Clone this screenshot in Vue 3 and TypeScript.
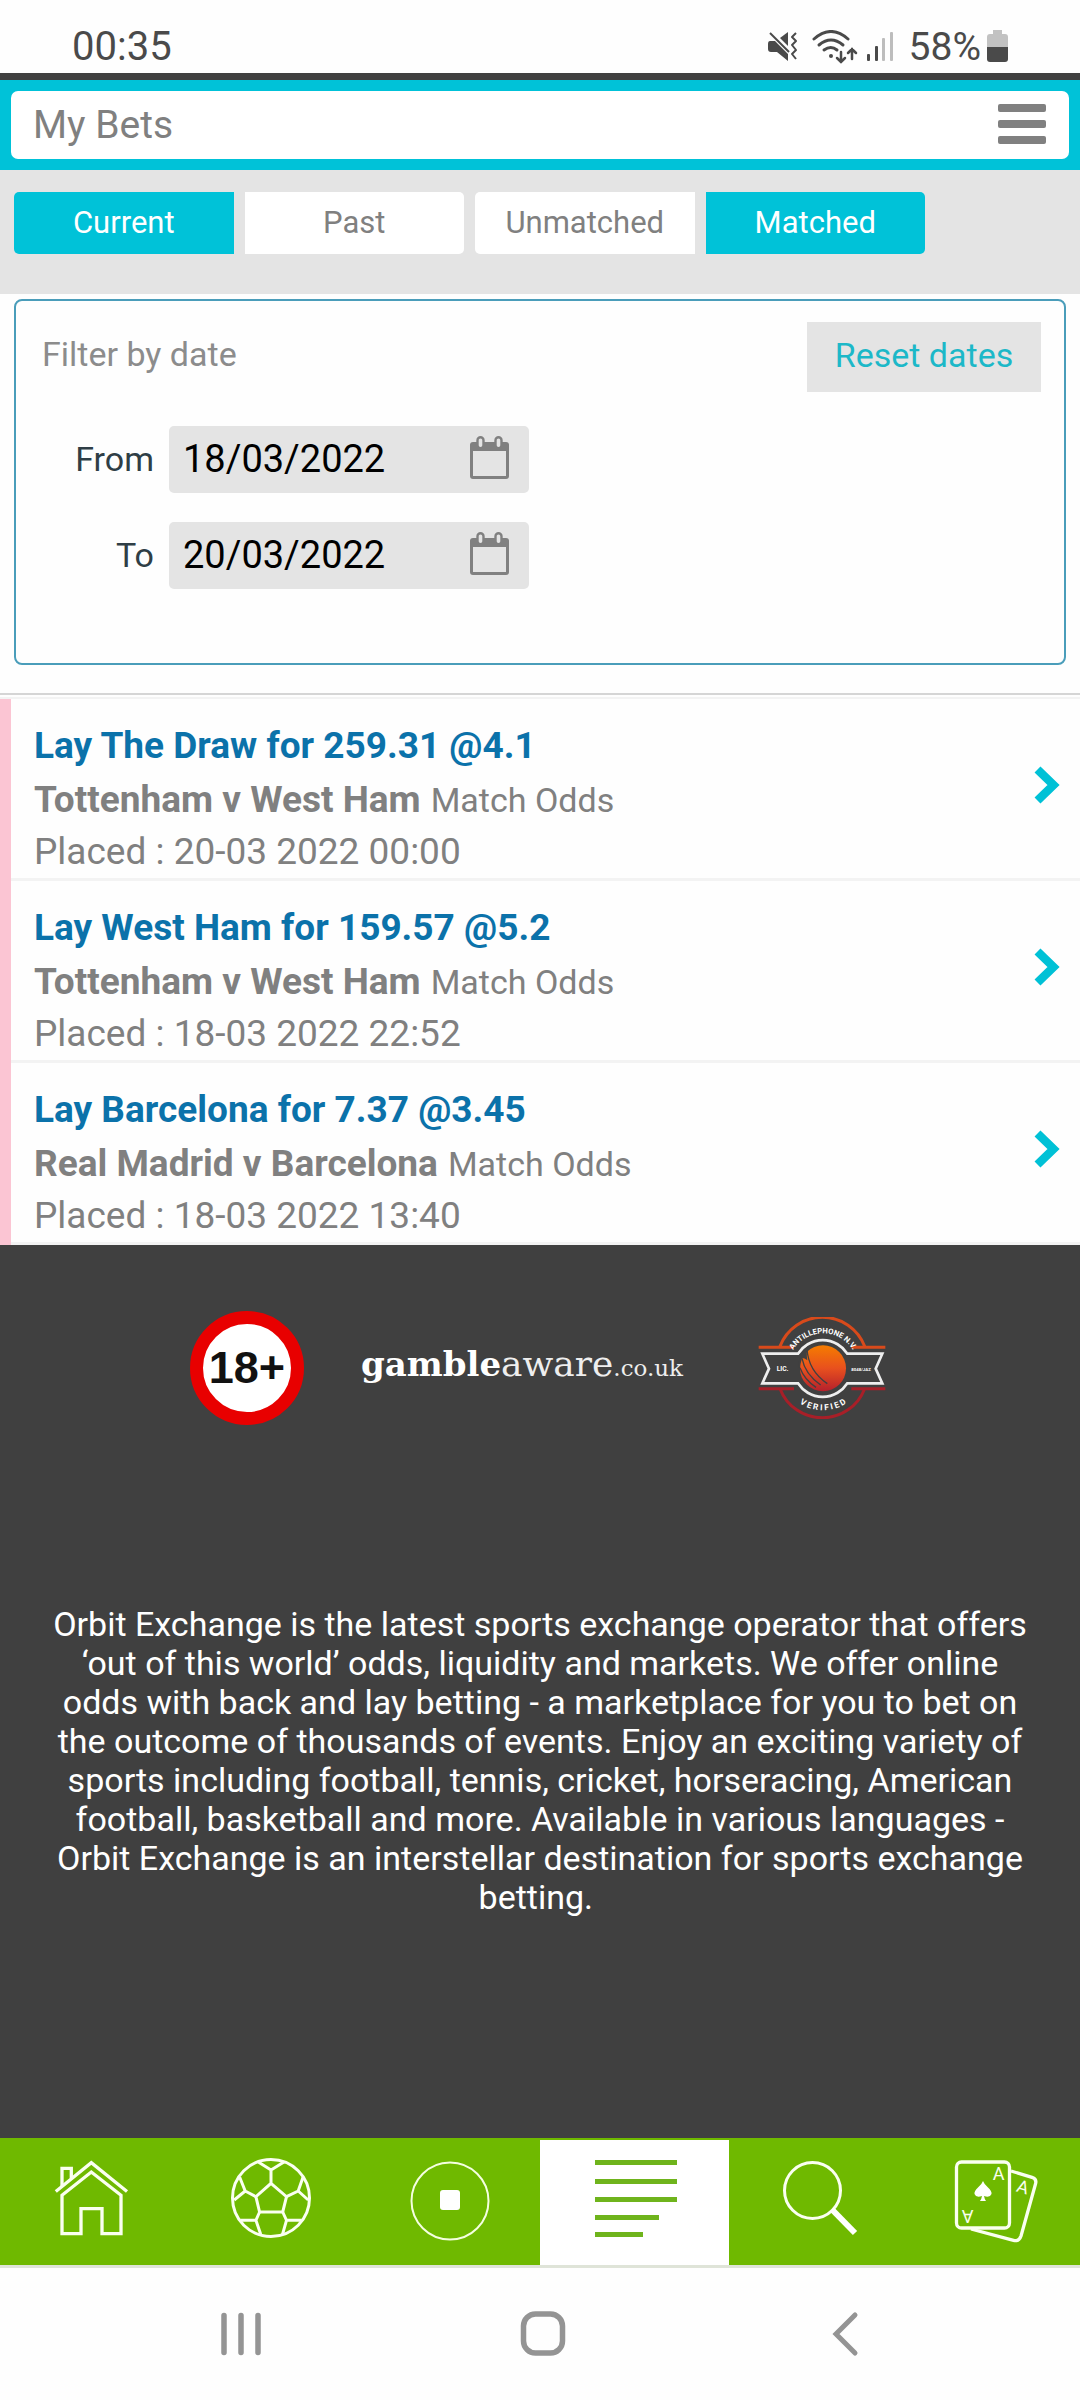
<script setup lang="ts">
import { ref } from 'vue'

interface Bet {
  id: number
  title: string
  event: string
  market: string
  placed: string
}

interface Tab {
  label: string
  edge: 'left' | 'right'
  active: boolean
}

const tabs: Tab[] = [
  { label: 'Current', edge: 'left', active: true },
  { label: 'Past', edge: 'right', active: false },
  { label: 'Unmatched', edge: 'left', active: false },
  { label: 'Matched', edge: 'right', active: true },
]

const bets: Bet[] = [
  { id: 1, title: 'Lay The Draw for 259.31 @4.1', event: 'Tottenham v West Ham', market: 'Match Odds', placed: '20-03 2022 00:00' },
  { id: 2, title: 'Lay West Ham for 159.57 @5.2', event: 'Tottenham v West Ham', market: 'Match Odds', placed: '18-03 2022 22:52' },
  { id: 3, title: 'Lay Barcelona for 7.37 @3.45', event: 'Real Madrid v Barcelona', market: 'Match Odds', placed: '18-03 2022 13:40' },
]

const dates = ref([
  { id: 'from', label: 'From', value: '18/03/2022' },
  { id: 'to', label: 'To', value: '20/03/2022' },
])
</script>

<template>
  <div class="page">
    <div class="status">
      <span class="time">00:35</span>
      <div class="indicators">
        <svg class="ico-mute" width="30" height="32" viewBox="0 0 30 32" fill="#4a4a4a">
          <path d="M2 10h5l13 13v7L9 21H3q-3 0-3-3v-5q0-3 2-3z" />
          <path d="M12 7l8-6v14z" />
          <path d="M2 2l19 19" stroke="#4a4a4a" stroke-width="2" />
          <path d="M28 2l-4 4 4 4-4 4 4 5-4 4 4 5" fill="none" stroke="#4a4a4a" stroke-width="2" stroke-linejoin="round" />
        </svg>
        <svg class="ico-wifi" width="46" height="34" viewBox="0 0 46 34" fill="none" stroke="#4a4a4a" stroke-width="3" stroke-linecap="round">
          <path d="M2 9q17-15 34 0" />
          <path d="M7 15q12-10 24 0" />
          <path d="M12 20q7-5 13 0" />
          <circle cx="19" cy="26" r="2" fill="#4a4a4a" stroke="none" />
          <path d="M29 22v10M25 28l4 4 4-4M40 29V19M36 23l4-4 4 4" stroke-width="2.5" />
        </svg>
        <svg class="ico-signal" width="28" height="32" viewBox="0 0 28 32">
          <rect x="1" y="23" width="3" height="7" rx="1" fill="#4a4a4a" />
          <rect x="9" y="15" width="3" height="15" rx="1" fill="#4a4a4a" />
          <rect x="16" y="7" width="3" height="23" rx="1" fill="#bdbdbd" />
          <rect x="24" y="1" width="3" height="29" rx="1" fill="#bdbdbd" />
        </svg>
        <span class="percent">58%</span>
        <svg class="ico-battery" width="21" height="32" viewBox="0 0 21 32">
          <path d="M6 0h9v4h3q3 0 3 3v10H0V7q0-3 3-3h3z" fill="#c2c2c2" />
          <path d="M0 17h21v12q0 3-3 3H3q-3 0-3-3z" fill="#4a4a4a" />
        </svg>
      </div>
    </div>

    <header class="header">
      <div class="title-bar">
        <h1>My Bets</h1>
        <button class="menu" type="button" aria-label="Menu"><i></i><i></i><i></i></button>
      </div>
    </header>

    <div class="tabs">
      <button
        v-for="tab in tabs"
        :key="tab.label"
        type="button"
        class="tab"
        :class="[tab.edge, { active: tab.active }]"
      >{{ tab.label }}</button>
    </div>

    <main class="main">
      <section class="filter">
        <div class="filter-head">
          <span class="filter-title">Filter by date</span>
          <button class="reset" type="button">Reset dates</button>
        </div>
        <div v-for="d in dates" :key="d.id" class="field-row">
          <label :for="d.id">{{ d.label }}</label>
          <div class="field">
            <input :id="d.id" v-model="d.value" type="text" />
            <button type="button" class="calendar" :aria-label="`Pick ${d.label} date`">
              <svg width="39" height="43" viewBox="0 0 39 43">
                <rect x="1.5" y="9" width="36" height="32.5" rx="1.5" fill="none" stroke="#808080" stroke-width="3" />
                <path d="M3 6h33q3 0 3 3v6H0V9q0-3 3-3z" fill="#808080" />
                <rect x="7.5" y="1.2" width="6" height="11" rx="3" fill="#e4e4e4" stroke="#808080" stroke-width="2.4" />
                <rect x="25.5" y="1.2" width="6" height="11" rx="3" fill="#e4e4e4" stroke="#808080" stroke-width="2.4" />
              </svg>
            </button>
          </div>
        </div>
      </section>

      <ul class="bets">
        <li v-for="bet in bets" :key="bet.id">
          <a href="#" class="bet">
            <div class="bet-text">
              <div class="bet-title">{{ bet.title }}</div>
              <div class="bet-event"><strong>{{ bet.event }}</strong><span>{{ bet.market }}</span></div>
              <div class="bet-placed">Placed : {{ bet.placed }}</div>
            </div>
            <svg width="26" height="40" viewBox="0 0 26 40">
              <path d="M3.5 4.5L19.5 20L3.5 35.5" fill="none" stroke="#00c1d6" stroke-width="8.5" />
            </svg>
          </a>
        </li>
      </ul>
    </main>

    <footer class="footer">
      <div class="logos">
        <div class="age">18+</div>
        <a href="#" class="aware"><b>gamble</b>aware<small>.co.uk</small></a>
        <svg class="licence" width="128" height="102" viewBox="54 84 384 306">
          <defs>
            <linearGradient id="orb" x1="0" y1="0" x2="0" y2="1">
              <stop offset="0" stop-color="#f57c00" />
              <stop offset="0.5" stop-color="#e8501e" />
              <stop offset="1" stop-color="#b5202c" />
            </linearGradient>
            <path id="arc-top" d="M144 238A105 105 0 0 1 354 238" />
            <path id="arc-bottom" d="M123 238A126 126 0 0 0 375 238" />
          </defs>
          <path d="M56 175H162M120 172A136 136 0 0 1 374 172M334 175H436" fill="none" stroke="#d84a1b" stroke-width="9" />
          <path d="M56 299H162M120 299A136 136 0 0 0 374 299M334 299H436" fill="none" stroke="#a81f28" stroke-width="9" />
          <path d="M67 194H174A88 88 0 0 1 322 194H427L407 239L427 283H322A88 88 0 0 1 174 283H67L87 239Z" fill="#404040" stroke="#eee" stroke-width="8" />
          <circle cx="249" cy="238" r="69" fill="url(#orb)" />
          <path d="M174 230Q182 190 204 170Q198 190 202 214Q190 205 184 208Q180 215 180 240Z" fill="#404040" />
          <path d="M201 180Q205 245 262 284M186 208Q195 255 242 288M180 236Q192 270 228 295" fill="none" stroke="#404040" stroke-width="4" />
          <g class="licence-text">
            <text font-size="23"><textPath href="#arc-top" startOffset="50%" text-anchor="middle">ANTILLEPHONE N.V.</textPath></text>
            <text font-size="25"><textPath href="#arc-bottom" startOffset="50%" text-anchor="middle">V E R I F I E D</textPath></text>
            <text x="110" y="247" font-size="20">LIC.</text>
            <text x="334" y="245" font-size="13">8048/JAZ</text>
          </g>
        </svg>
      </div>
      <p>Orbit Exchange is the latest sports exchange operator that offers ‘out of this world’ odds, liquidity and markets. We offer online odds with back and lay betting - a marketplace for you to bet on the outcome of thousands of events. Enjoy an exciting variety of sports including football, tennis, cricket, horseracing, American football, basketball and more. Available in various languages - Orbit Exchange is an interstellar destination for sports exchange betting.&nbsp;</p>
    </footer>

    <nav class="bottom-nav">
      <a href="#" aria-label="Home">
        <svg width="90" height="90" viewBox="0 0 90 90" fill="none" stroke="#fafff0" stroke-width="3.3">
          <path d="M10.8 35.5L46.3 6.7L82 35.5" />
          <path d="M17 30V12.3H26.3V22" />
          <path d="M17 39.3L46.3 16L76 39.3V77.7H57V52.7H36V77.7H17Z" />
        </svg>
      </a>
      <a href="#" aria-label="Sports">
        <svg width="90" height="90" viewBox="0 0 90 90" fill="none" stroke="#fafff0" stroke-width="3">
          <circle cx="46" cy="42" r="38.5" />
          <path d="M33.3 6L46 14L59 6M46 14V27.3M46 27.3L61.5 40.7L57.7 56H34.6L30.9 40.7Z" />
          <path d="M61.5 40.7L73.2 35L78 21.3M73.2 35L83.2 44M30.9 40.7L20.2 35L14.7 21.3M20.2 35L9.2 44" />
          <path d="M57.7 56L61.5 64.3H76.6M61.5 64.3L57.5 78.3M34.6 56L30.9 64.3H15.4M30.9 64.3L35.7 78.3" />
        </svg>
      </a>
      <a href="#" aria-label="In play">
        <svg width="90" height="90" viewBox="0 0 90 90">
          <circle cx="45" cy="45" r="38.5" fill="none" stroke="#f4ffe0" stroke-width="2" />
          <rect x="35" y="34" width="20" height="20" rx="3" fill="#fff" />
        </svg>
      </a>
      <a href="#" class="current" aria-label="My bets">
        <svg width="90" height="90" viewBox="0 0 90 90" fill="#6fb41c">
          <rect x="5" y="4" width="82" height="5" />
          <rect x="5" y="23" width="82" height="5" />
          <rect x="5" y="41" width="82" height="5" />
          <rect x="5" y="59" width="64" height="5" />
          <rect x="5" y="76" width="48" height="5" />
        </svg>
      </a>
      <a href="#" aria-label="Search">
        <svg width="90" height="90" viewBox="0 0 90 90" fill="none" stroke="#fafff0">
          <circle cx="37.5" cy="34.5" r="28" stroke-width="3" />
          <path d="M57 53.5L80 77" stroke="#fff" stroke-width="6" />
        </svg>
      </a>
      <a href="#" aria-label="Casino">
        <svg width="90" height="90" viewBox="0 0 90 90" fill="none" stroke="#fafff0" stroke-width="3.3">
          <path d="M60 15L81 21.3Q86 23 84.5 28L70 80Q68 86 62.5 84.3L20 73" />
          <rect x="5.5" y="6" width="53" height="66" rx="5" />
          <path d="M32 25Q33 28 37 31.5Q41 35 40.5 38Q39 42 33 40Q33.5 43 35 45H29Q30.5 43 31 40Q25 42 23.5 38Q23 35 27 31.5Q31 28 32 25Z" fill="#fff" stroke="none" />
          <g class="card-letter" fill="#fafff0" stroke="none" text-anchor="middle">
            <text x="47.5" y="24">A</text>
            <text transform="translate(16.5 54) rotate(180)">A</text>
            <text transform="translate(70 37) rotate(17)">A</text>
          </g>
        </svg>
      </a>
    </nav>

    <div class="system-nav">
      <button type="button" aria-label="Recent apps">
        <svg width="48" height="48" viewBox="0 0 48 48" stroke="#949494" stroke-width="5.5" stroke-linecap="round">
          <path d="M7 5.5V42.5M24 5.5V42.5M41 5.5V42.5" />
        </svg>
      </button>
      <button type="button" aria-label="Home screen">
        <svg width="48" height="48" viewBox="0 0 48 48" fill="none" stroke="#949494" stroke-width="5.5">
          <rect x="4.5" y="4" width="39" height="39" rx="12" />
        </svg>
      </button>
      <button type="button" aria-label="Back">
        <svg width="48" height="48" viewBox="0 0 48 48" fill="none" stroke="#949494" stroke-width="5" stroke-linecap="round">
          <path d="M34 5L15 24L34 43" />
        </svg>
      </button>
    </div>
  </div>
</template>

<style>
body {
  margin: 0;
  background: #fff;
}
</style>

<style scoped>
.page {
  display: flex;
  flex-direction: column;
  min-height: 100vh;
  font-family: Roboto, "Liberation Sans", sans-serif;
  color: #808080;
  background: #fefefe;
}
button,
input {
  margin: 0;
  padding: 0;
  border: 0;
  background: none;
  font: inherit;
  color: inherit;
}
a {
  color: inherit;
  text-decoration: none;
}
svg {
  display: block;
  flex: none;
}

.status {
  display: flex;
  justify-content: space-between;
  align-items: center;
  box-sizing: border-box;
  height: 80px;
  padding: 20px 72px 0;
  border-bottom: 7px solid #404040;
  color: #4a4a4a;
  font-size: 40px;
  line-height: 48px;
}
.indicators {
  display: flex;
  align-items: center;
}
.ico-wifi {
  margin-left: 14px;
}
.ico-signal {
  margin-left: 8px;
}
.ico-battery {
  margin-bottom: 2px;
}
.percent {
  margin: 0 6px 0 15px;
  font-size: 39px;
}

.header {
  padding: 11px;
  background: #00c2d8;
}
.title-bar {
  display: flex;
  justify-content: space-between;
  align-items: center;
  height: 68px;
  padding: 0 23px 0 22px;
  border-radius: 7px;
  background: #fff;
}
h1 {
  margin: 0;
  font-size: 39px;
  font-weight: 400;
  line-height: 68px;
}
.menu {
  display: flex;
  flex-direction: column;
  gap: 8px;
  padding-bottom: 2px;
}
.menu i {
  width: 48px;
  height: 8px;
  border-radius: 2px;
  background: #808080;
}

.tabs {
  display: flex;
  gap: 11px;
  padding: 22px 155px 40px 14px;
  background: #e4e4e4;
}
.tab {
  flex: 1 1 0;
  height: 62px;
  padding-bottom: 2px;
  background: #fff;
  font-size: 31px;
}
.tab.left {
  border-radius: 5px 0 0 5px;
}
.tab.right {
  border-radius: 0 5px 5px 0;
}
.tab.active {
  background: #00c2d8;
  color: #fff;
}

.filter {
  margin: 5px 14px 28px;
  padding: 21px 23px 74px 26px;
  border: 2px solid #4a9dba;
  border-radius: 8px;
  font-size: 34px;
}
.filter-head {
  display: flex;
  justify-content: space-between;
  margin-bottom: 34px;
  line-height: 64px;
}
.filter-title {
  color: #8c8c8c;
}
.reset {
  width: 234px;
  height: 70px;
  padding-bottom: 4px;
  background: #e4e4e4;
  color: #1cb8c8;
}
.field-row {
  display: flex;
  gap: 15px;
}
.field-row + .field-row {
  margin-top: 29px;
}
.field-row label {
  width: 112px;
  text-align: right;
  line-height: 67px;
  color: #2f3e46;
}
.field {
  display: flex;
  box-sizing: border-box;
  width: 360px;
  height: 67px;
  padding: 0 20px 0 14px;
  border-radius: 5px;
  background: #e4e4e4;
}
.field input {
  flex: 1;
  min-width: 0;
  padding-bottom: 2px;
  color: #000;
  font-size: 38px;
  outline: 0;
}
.calendar {
  padding-bottom: 5px;
}

.bets {
  margin: 0;
  padding: 2px 0 0;
  border-top: 2px solid #d5d5d5;
  list-style: none;
}
.bets li {
  border-left: 11px solid #fbc5d3;
}
.bet {
  display: flex;
  justify-content: space-between;
  align-items: center;
  padding: 20px 20px 0 23px;
  border-bottom: 3px solid #f3f3f3;
  font-size: 37px;
  line-height: 53px;
}
.bet svg {
  margin-bottom: 28px;
}
.bets::before {
  content: "";
  display: block;
  height: 2px;
  background: #f3f3f3;
}
.bet-title {
  color: #0b72aa;
  font-weight: 700;
  line-height: 54px;
}
.bet-event {
  display: flex;
  align-items: baseline;
  gap: 10px;
}
.bet-event span {
  font-size: 34px;
  line-height: 48px;
}
.bet-placed {
  line-height: 52px;
}

.footer {
  flex: 1;
  padding: 66px 50px 0;
  background: #404040;
  color: #fff;
}
.logos {
  display: flex;
  justify-content: center;
  align-items: center;
  gap: 57px;
  padding-right: 4px;
}
.age {
  box-sizing: border-box;
  width: 114px;
  height: 114px;
  border: 13px solid #e80000;
  border-radius: 50%;
  background: #fff;
  color: #111;
  font: 700 45px/88px "Liberation Sans", Arial, sans-serif;
  text-align: center;
}
.aware {
  padding-bottom: 5px;
  color: #eee;
  font: 400 36px/48px "DejaVu Serif", serif;
}
.aware b {
  color: #fff;
  font-size: 34px;
}
.aware small {
  font-size: 23px;
}
.licence {
  margin-left: 18px;
}
.licence-text {
  fill: #fff;
  font-family: Roboto, sans-serif;
  font-weight: 700;
}
.footer p {
  margin: 180px 0 0;
  font-size: 34px;
  line-height: 39px;
  text-align: center;
}

.bottom-nav {
  display: grid;
  grid-template-columns: 180fr 180fr 180fr 189fr 182fr 169fr;
  height: 127px;
  border-bottom: 3px solid #dfe4d8;
  background: #6fb900;
}
.bottom-nav a {
  display: flex;
  justify-content: center;
  padding-top: 18px;
}
.bottom-nav .current {
  margin-top: 2px;
  padding-top: 16px;
  background: #fff;
}
.card-letter {
  font-size: 18px;
}

.system-nav {
  display: grid;
  grid-template-columns: repeat(3, 1fr);
  align-items: center;
  height: 132px;
  padding: 0 84px 0 90px;
  background: #fefefe;
}
.system-nav button {
  display: flex;
  justify-content: center;
}
</style>
